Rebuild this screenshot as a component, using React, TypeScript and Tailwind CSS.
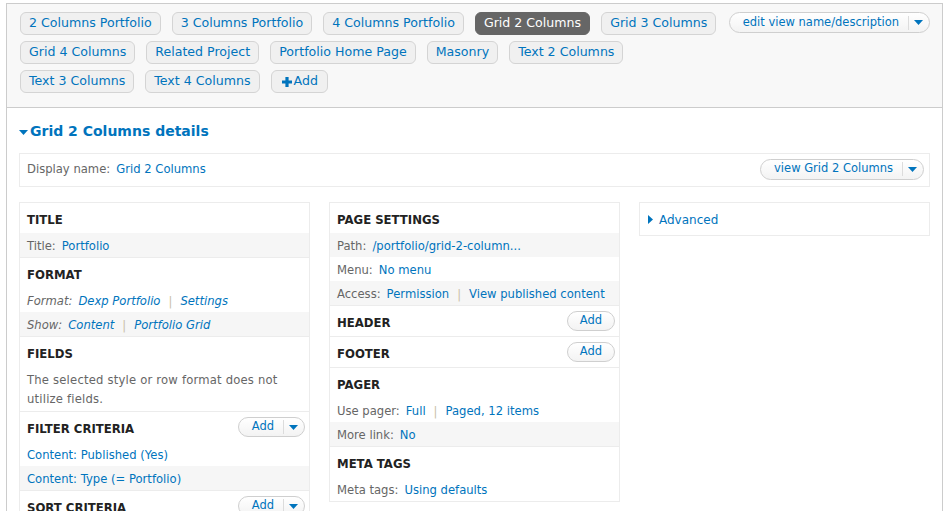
import React from "react";

const LINK = "text-[#0074bd]";

const tabRows = [
  ["2 Columns Portfolio", "3 Columns Portfolio", "4 Columns Portfolio", "Grid 2 Columns", "Grid 3 Columns"],
  ["Grid 4 Columns", "Related Project", "Portfolio Home Page", "Masonry", "Text 2 Columns"],
  ["Text 3 Columns", "Text 4 Columns"],
];

function Caret({ className = "" }: { className?: string }) {
  return (
    <svg width="9" height="5" viewBox="0 0 9 5" className={className}>
      <path d="M0 0H9L4.5 5Z" fill="#0074bd" />
    </svg>
  );
}

function DropButton({ label, arrow = true, className = "" }: { label: string; arrow?: boolean; className?: string }) {
  return (
    <span
      className={`inline-flex shrink-0 whitespace-nowrap items-center h-[20px] rounded-full border border-[#cfcfcf] bg-gradient-to-b from-white to-[#f3f3f3] text-[11.5px] leading-none ${LINK} ${className}`}
    >
      <span className={arrow ? "pl-[13px] pr-[9px]" : "px-[12px]"}>{label}</span>
      {arrow && (
        <span className="flex items-center h-[14px] border-l border-[#dcdcdc] pl-[5px] pr-[6px]">
          <Caret />
        </span>
      )}
    </span>
  );
}

function Sep() {
  return <span className="text-[#c9bfa8] px-[8px]">|</span>;
}

type Row = { gray?: boolean; italic?: boolean; content: React.ReactNode };

function Section({ title, add, rows, children }: { title: string; add?: "drop" | "plain"; rows?: Row[]; children?: React.ReactNode }) {
  return (
    <div className="border-t border-[#ececec] first:border-t-0">
      <div className="flex items-start justify-between pl-[7px] pr-[4px]">
        <div className="pt-[10px] pb-[6px] leading-[14px] text-[11.7px] font-bold text-[#222] uppercase">{title}</div>
        {add === "drop" && <DropButton label="Add" className="mt-[5px]" />}
        {add === "plain" && <DropButton label="Add" arrow={false} className="mt-[5px]" />}
      </div>
      {rows?.map((r, i) => (
        <div
          key={i}
          className={`h-[24px] pt-[4px] flex items-center px-[7px] text-[11.6px] ${r.gray ? "bg-[#f6f6f6]" : ""} ${r.italic ? "italic" : ""}`}
        >
          {r.content}
        </div>
      ))}
      {children}
    </div>
  );
}

function L({ children }: { children: React.ReactNode }) {
  return <span className="text-[#666] mr-[6px]">{children}</span>;
}
function A({ children }: { children: React.ReactNode }) {
  return <span className={LINK}>{children}</span>;
}

export default function App() {
  return (
    <div className="h-screen overflow-hidden bg-white pt-[3px] px-[6px] text-[#333]" style={{ fontFamily: '"DejaVu Sans", Verdana, sans-serif' }}>
      <div className="border border-[#cccccc] border-b-0 min-h-[508px]">
        {/* Display tabs */}
        <div className="bg-[#f8f8f8] border-b border-[#cccccc] pl-[13px] pr-[12px] pt-[8px] pb-[14px] flex items-start">
          <div className="w-[712px] flex flex-col gap-[6px]">
            {tabRows.map((row, ri) => (
              <div key={ri} className="flex gap-[11px]">
                {row.map((t) => {
                  const active = t === "Grid 2 Columns";
                  return (
                    <span
                      key={t}
                      className={`h-[23px] flex items-center px-[8px] rounded-[6px] border text-[12.6px] ${
                        active ? "bg-[#666] border-[#666] text-white" : "bg-[#f0f0f0] border-[#d4d4d4] text-[#0074bd]"
                      }`}
                    >
                      {t}
                    </span>
                  );
                })}
                {ri === 2 && (
                  <span className="h-[23px] flex items-center pl-[10px] pr-[9px] rounded-[6px] border border-[#d4d4d4] bg-[#f0f0f0] text-[12.6px] text-[#0074bd]">
                    <svg width="10" height="10" viewBox="0 0 10 10" className="mr-[2px]">
                      <path d="M3.4 0H6.6V3.4H10V6.6H6.6V10H3.4V6.6H0V3.4H3.4Z" fill="#0074bd" />
                    </svg>
                    Add
                  </span>
                )}
              </div>
            ))}
          </div>
          <DropButton label="edit view name/description" className="ml-auto h-[21px] text-[11.5px]" />
        </div>

        {/* Details */}
        <div className="px-[12px] pb-[10px]">
          <div className="h-[45px] flex items-center pt-[2px]">
            <Caret className="mr-[2px] mt-[1px]" />
            <span className={`text-[14px] font-bold ${LINK}`}>Grid 2 Columns details</span>
          </div>

          <div className="h-[34px] border border-[#ececec] flex items-center justify-between pl-[7px] pr-[5px] text-[11.6px]">
            <span>
              <L>Display name:</L>
              <A>Grid 2 Columns</A>
            </span>
            <DropButton label="view Grid 2 Columns" className="mt-[-2px] h-[21px]" />
          </div>

          <div className="grid grid-cols-3 gap-[19px] mt-[15px] items-start">
            {/* Column 1 */}
            <div className="border border-[#ececec]">
              <Section title="Title" rows={[{ gray: true, content: <><L>Title:</L><A>Portfolio</A></> }]} />
              <Section
                title="Format"
                rows={[
                  { italic: true, content: <><L>Format:</L><A>Dexp Portfolio</A><Sep /><A>Settings</A></> },
                  { italic: true, gray: true, content: <><L>Show:</L><A>Content</A><Sep /><A>Portfolio Grid</A></> },
                ]}
              />
              <Section title="Fields">
                <div className="px-[7px] pt-[4px] pb-[2px] text-[11.6px] leading-[19px] text-[#666] tracking-[0.2px]">
                  The selected style or row format does not utilize fields.
                </div>
              </Section>
              <Section
                title="Filter criteria"
                add="drop"
                rows={[
                  { content: <A>Content: Published (Yes)</A> },
                  { gray: true, content: <A>Content: Type (= Portfolio)</A> },
                ]}
              />
              <Section title="Sort criteria" add="drop" rows={[{ content: <A>Content: Post date (desc)</A> }]} />
            </div>

            {/* Column 2 */}
            <div className="border border-[#ececec]">
              <Section
                title="Page settings"
                rows={[
                  { gray: true, content: <><L>Path:</L><A>/portfolio/grid-2-column...</A></> },
                  { content: <><L>Menu:</L><A>No menu</A></> },
                  { gray: true, content: <><L>Access:</L><A>Permission</A><Sep /><A>View published content</A></> },
                ]}
              />
              <Section title="Header" add="plain" />
              <Section title="Footer" add="plain" />
              <Section
                title="Pager"
                rows={[
                  { content: <><L>Use pager:</L><A>Full</A><Sep /><A>Paged, 12 items</A></> },
                  { gray: true, content: <><L>More link:</L><A>No</A></> },
                ]}
              />
              <Section title="Meta tags" rows={[{ content: <><L>Meta tags:</L><A>Using defaults</A></> }]} />
            </div>

            {/* Column 3 */}
            <div className="border border-[#ececec] h-[34px] flex items-center pl-[8px] pt-[1px]">
              <svg width="5" height="9" viewBox="0 0 5 9" className="mr-[6px]">
                <path d="M0 0L5 4.5L0 9Z" fill="#0074bd" />
              </svg>
              <span className={`text-[12px] ${LINK}`}>Advanced</span>
            </div>
          </div>
        </div>
      </div>
    </div>
  );
}
